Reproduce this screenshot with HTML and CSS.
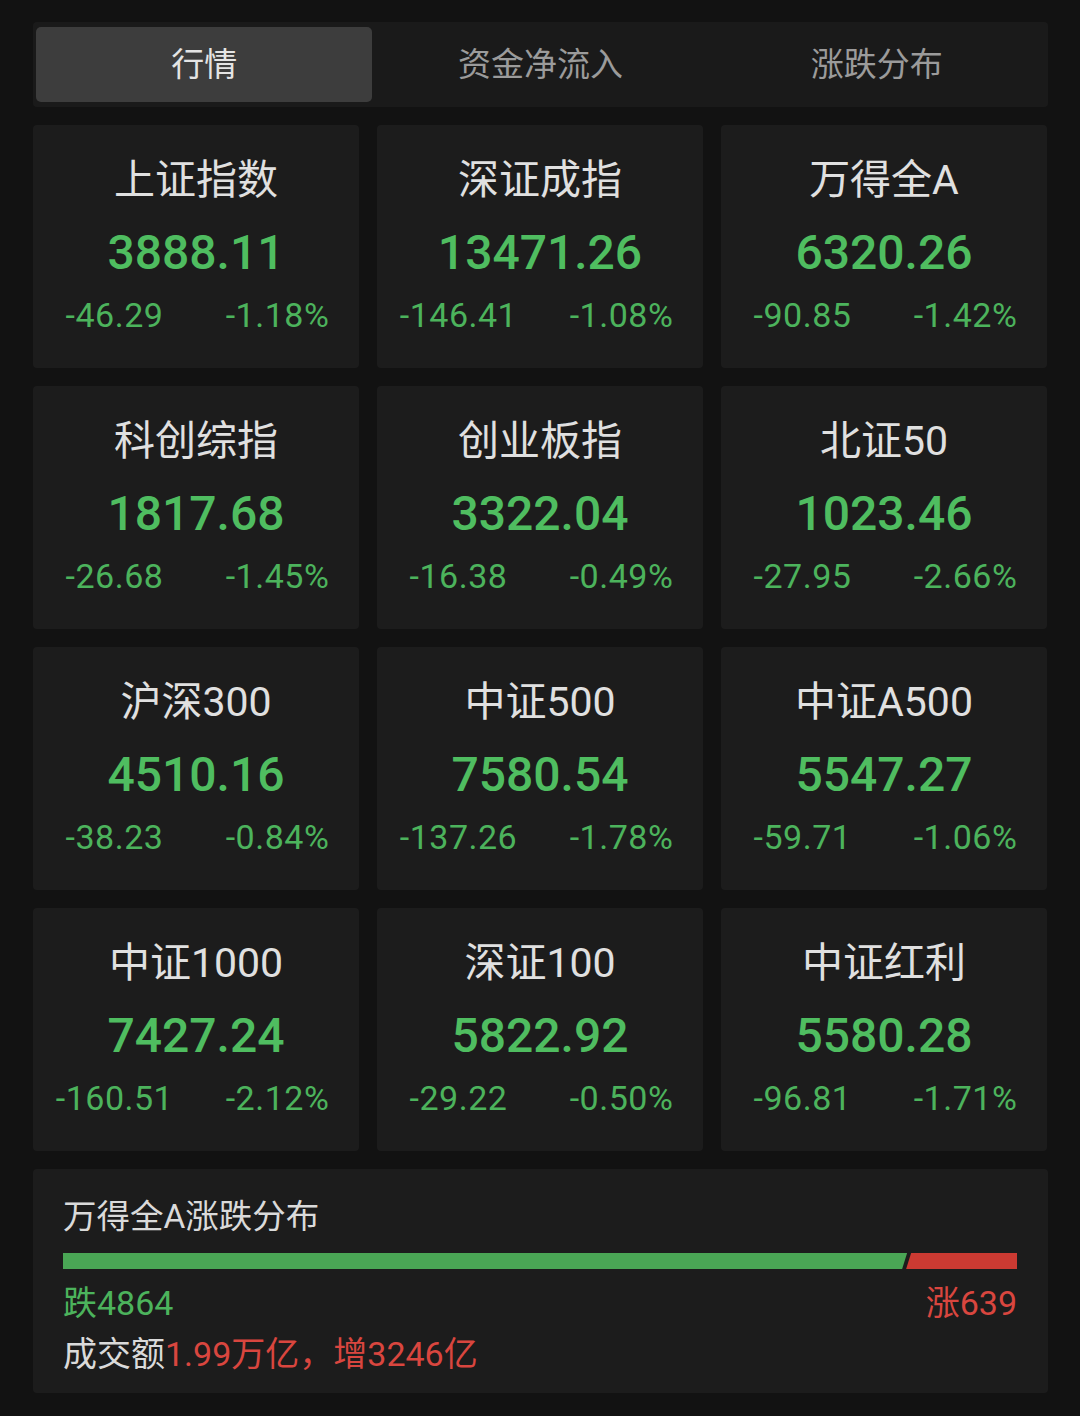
FILE: index.html
```html
<!DOCTYPE html>
<html lang="zh-CN">
<head>
    <meta charset="UTF-8">
    <meta name="viewport" content="width=device-width, initial-scale=1.0">
    <title>行情</title>
    <link rel="stylesheet" href="styles.css">
</head>
<body>
    <div class="page">
        <div class="tabs">
            <div class="tab active">行情</div>
            <div class="tab">资金净流入</div>
            <div class="tab">涨跌分布</div>
        </div>

        <div class="grid">
            <div class="card">
                <div class="name">上证指数</div>
                <div class="price">3888.11</div>
                <div class="change"><span>-46.29</span><span>-1.18%</span></div>
            </div>
            <div class="card">
                <div class="name">深证成指</div>
                <div class="price">13471.26</div>
                <div class="change"><span>-146.41</span><span>-1.08%</span></div>
            </div>
            <div class="card">
                <div class="name">万得全A</div>
                <div class="price">6320.26</div>
                <div class="change"><span>-90.85</span><span>-1.42%</span></div>
            </div>
            <div class="card">
                <div class="name">科创综指</div>
                <div class="price">1817.68</div>
                <div class="change"><span>-26.68</span><span>-1.45%</span></div>
            </div>
            <div class="card">
                <div class="name">创业板指</div>
                <div class="price">3322.04</div>
                <div class="change"><span>-16.38</span><span>-0.49%</span></div>
            </div>
            <div class="card">
                <div class="name">北证50</div>
                <div class="price">1023.46</div>
                <div class="change"><span>-27.95</span><span>-2.66%</span></div>
            </div>
            <div class="card">
                <div class="name">沪深300</div>
                <div class="price">4510.16</div>
                <div class="change"><span>-38.23</span><span>-0.84%</span></div>
            </div>
            <div class="card">
                <div class="name">中证500</div>
                <div class="price">7580.54</div>
                <div class="change"><span>-137.26</span><span>-1.78%</span></div>
            </div>
            <div class="card">
                <div class="name">中证A500</div>
                <div class="price">5547.27</div>
                <div class="change"><span>-59.71</span><span>-1.06%</span></div>
            </div>
            <div class="card">
                <div class="name">中证1000</div>
                <div class="price">7427.24</div>
                <div class="change"><span>-160.51</span><span>-2.12%</span></div>
            </div>
            <div class="card">
                <div class="name">深证100</div>
                <div class="price">5822.92</div>
                <div class="change"><span>-29.22</span><span>-0.50%</span></div>
            </div>
            <div class="card">
                <div class="name">中证红利</div>
                <div class="price">5580.28</div>
                <div class="change"><span>-96.81</span><span>-1.71%</span></div>
            </div>
        </div>

        <div class="breadth">
            <div class="breadth-title">万得全A涨跌分布</div>
            <div class="bar">
                <div class="bar-down" style="flex: 4864;"></div>
                <div class="bar-up" style="flex: 639;"></div>
            </div>
            <div class="counts">
                <span class="down">跌4864</span>
                <span class="up">涨639</span>
            </div>
            <div class="turnover">成交额<span class="up">1.99万亿，增3246亿</span></div>
        </div>
    </div>
</body>
</html>
```

FILE: styles.css
```css
body {
    margin: 0;
    background: #121212;
    font-family: Roboto, "Noto Sans CJK SC", sans-serif;
    color: #e2e2e2;
}

.page {
    width: 1015px;
    padding: 22px 0 0 33px;
}

.tabs {
    display: flex;
    height: 85px;
    padding: 5px 3px;
    box-sizing: border-box;
    background: #1a1a1a;
    border-radius: 4px;
}

.tab {
    flex: 1;
    display: flex;
    justify-content: center;
    align-items: center;
    padding-bottom: 5px;
    font-size: 33px;
    color: #9b9b9b;
    border-radius: 5px;
}

.tab.active {
    background: #3d3d3d;
    color: #e4e4e4;
}

.grid {
    display: grid;
    grid-template-columns: repeat(3, 326px);
    grid-auto-rows: 243px;
    gap: 18px;
    margin-top: 18px;
}

.card {
    background: #1c1c1c;
    border-radius: 4px;
    padding-top: 30px;
    box-sizing: border-box;
}

.name {
    height: 50px;
    line-height: 50px;
    font-size: 41px;
    text-align: center;
    color: #e0e0e0;
}

.price {
    height: 56px;
    line-height: 56px;
    margin-top: 20px;
    font-size: 48px;
    font-weight: 500;
    text-align: center;
    color: #4fbd60;
}

.change {
    display: grid;
    grid-template-columns: 1fr 1fr;
    height: 40px;
    line-height: 40px;
    margin-top: 14px;
    font-size: 34px;
    letter-spacing: 0.5px;
    color: #4cb35c;
    text-align: center;
}

.breadth {
    margin-top: 18px;
    height: 224px;
    box-sizing: border-box;
    padding: 30px 31px 0 30px;
    background: #1c1c1c;
    border-radius: 4px;
}

.breadth-title {
    height: 36px;
    line-height: 36px;
    font-size: 33.5px;
    color: #dadada;
}

.bar {
    display: flex;
    height: 16px;
    margin-top: 18px;
}

.bar-down {
    background: #4aa655;
    clip-path: polygon(0 0, 100% 0, calc(100% - 5px) 100%, 0 100%);
}

.bar-up {
    background: #cc3a32;
    margin-left: -1px;
    clip-path: polygon(5px 0, 100% 0, 100% 100%, 0 100%);
}

.counts {
    display: flex;
    justify-content: space-between;
    height: 38px;
    line-height: 38px;
    margin-top: 15px;
    font-size: 34px;
}

.turnover {
    height: 38px;
    line-height: 38px;
    margin-top: 13px;
    font-size: 34px;
    color: #dadada;
}

.down {
    color: #4cb35c;
}

.up {
    color: #d9463f;
}
```
